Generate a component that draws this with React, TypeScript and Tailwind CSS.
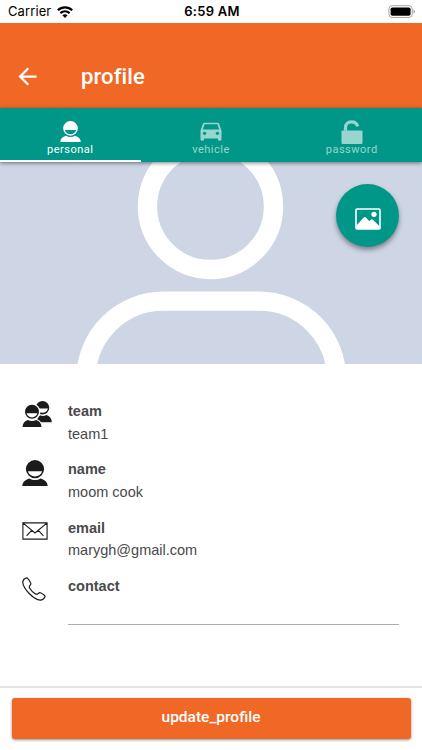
import type { ReactNode } from "react";
import { MdArrowBack, MdDirectionsCar } from "react-icons/md";

type Tab = {
  label: string;
  icon: ReactNode;
  active?: boolean;
};

type Field = {
  label: string;
  value?: string;
  icon: ReactNode;
};

function PersonIcon({ className }: { className?: string }) {
  return (
    <svg viewBox="0 0 26 26" className={className} fill="currentColor">
      <path
        fillRule="evenodd"
        d="M13 0a9.100 9.100 0 1 1 0 18.200A9.100 9.100 0 0 1 13 0ZM5.900 11.200c.9 3.200 3.600 5.200 7.100 5.200s6.200-2 7.100-5.200Z"
      />
      <path d="M.3 26c.2-4 2.700-6.300 7.200-7.600 3.400 2 7.600 2 11 0 4.500 1.300 7 3.600 7.200 7.600Z" />
    </svg>
  );
}

function TeamIcon() {
  return (
    <svg viewBox="0 0 30 26" className="h-[26px] w-[30px]" fill="currentColor">
      <path
        fillRule="evenodd"
        d="M20.500 0a6.800 6.800 0 1 1 0 13.600A6.800 6.800 0 0 1 20.500 0ZM15 7.400c.8 2.800 2.800 4.300 5.500 4.300s4.700-1.500 5.500-4.300Z"
      />
      <path d="M15 21.300c.1-3.500 1.200-6 3-7 2.100.9 4.300.9 6.400-.2 3.300 1 5.200 3.200 5.400 7.200Z" />
      <circle cx="10" cy="11" r="8.400" fill="white" />
      <path d="M-.7 27c.2-5 2.500-7.800 5.800-8.800h9.800c3.300 1 5.500 3.800 5.700 8.800Z" fill="white" />
      <path
        fillRule="evenodd"
        d="M10 3.800a7 7 0 1 1 0 14 7 7 0 0 1 0-14ZM4.600 12.300c.8 2.600 2.800 4.100 5.400 4.100s4.600-1.500 5.400-4.100Z"
      />
      <path d="M.5 26c.2-3.700 2-5.800 5.400-7 2.600 1.300 5.600 1.300 8.200 0 3.400 1.200 5.200 3.300 5.400 7Z" />
    </svg>
  );
}

function LockOpenIcon() {
  return (
    <svg viewBox="0 0 22 24" className="h-6 w-[22px]" fill="currentColor">
      <path
        d="M4.500 10.400V7.500C4.500 4.200 7 1.800 10.500 1.800c3.200 0 5.400 1.800 6.200 4.600"
        fill="none"
        stroke="currentColor"
        strokeWidth="3.200"
      />
      <rect x=".5" y="10.400" width="21" height="13.500" rx="1.200" />
    </svg>
  );
}

function MailIcon() {
  return (
    <svg
      viewBox="0 0 26 18"
      className="mt-1 h-[18px] w-[26px]"
      fill="none"
      stroke="currentColor"
      strokeWidth="1.100"
    >
      <path d="M.9.9h24.200v16.200H.9ZM.9.9 13 11 25.100.9M4.600 13.800l5-5.400M21.400 13.800l-5-5.400" />
    </svg>
  );
}

function PhoneIcon() {
  return (
    <svg
      viewBox="0 0 24 24"
      className="mt-px size-6"
      fill="none"
      stroke="currentColor"
      strokeWidth="1.200"
      strokeLinejoin="round"
    >
      <path d="M3.500 1.200C1.700 2 .7 3.700.8 5.500c.3 3.500 3 7.500 6.400 11 3.500 3.500 7.400 6.300 11 6.600 1.900.1 3.700-1 4.600-2.800.4-.8.2-1.500-.5-2.100-1.200-1-2.400-1.700-3.900-2.400-.8-.3-1.400-.1-2 .5-1.200 1.400-2.100 1.200-3.300.4-2-1.300-4-3.300-5.400-5.500-.8-1.300-.7-2 .6-3.200.6-.6.7-1.200.4-2C8 4.500 7.100 3 5.900 1.600c-.6-.8-1.500-.9-2.400-.4Z" />
    </svg>
  );
}

function ImageIcon() {
  return (
    <svg viewBox="0 0 26 22" className="h-[22px] w-[26px]" fill="currentColor">
      <rect
        x="1"
        y="1"
        width="24"
        height="20"
        rx="1"
        fill="none"
        stroke="currentColor"
        strokeWidth="1.600"
      />
      <circle cx="19" cy="6.300" r="2.600" />
      <path d="M1.500 17.500 8.700 9.600c.7-.8 1.500-.8 2.200 0l3.400 3.700 1.500-1.500c.7-.7 1.400-.7 2.100 0l6.600 6.400V21H1.500Z" />
    </svg>
  );
}

const tabs: Tab[] = [
  { label: "personal", icon: <PersonIcon className="mb-[2px] size-[21px]" />, active: true },
  { label: "vehicle", icon: <MdDirectionsCar className="h-[27px] w-[28px]" preserveAspectRatio="none" /> },
  { label: "password", icon: <LockOpenIcon /> },
];

const fields: Field[] = [
  { label: "team", value: "team1", icon: <TeamIcon /> },
  { label: "name", value: "moom cook", icon: <PersonIcon className="mt-px size-[26px]" /> },
  { label: "email", value: "marygh@gmail.com", icon: <MailIcon /> },
  { label: "contact", icon: <PhoneIcon /> },
];

function StatusBar() {
  return (
    <div className="grid h-[23px] grid-cols-3 items-center pr-[6px] pl-2 font-['Inter',sans-serif] text-black">
      <div className="flex items-center gap-[6px]">
        <span className="text-[13px] leading-none tracking-[0.1px]">Carrier</span>
        <svg viewBox="0 0 16 12" className="h-3 w-4" fill="none" stroke="currentColor">
          <path d="M.8 4.300c4.100-3.900 10.300-3.900 14.400 0" strokeWidth="2.200" />
          <path d="M3.400 7.100c2.700-2.400 6.500-2.400 9.200 0" strokeWidth="2.100" />
          <path d="M8 12 5.400 9.300c1.500-1.300 3.700-1.300 5.200 0Z" fill="currentColor" stroke="none" />
        </svg>
      </div>
      <span className="text-center text-[13px] leading-none font-semibold tracking-[0.25px]">
        6:59 AM
      </span>
      <svg viewBox="0 0 28 13" className="h-[13px] w-7 justify-self-end">
        <rect x=".9" y=".7" width="23.400" height="11.800" rx="3.400" fill="none" stroke="#a5a5a5" />
        <rect x="2.600" y="2.400" width="20" height="8.400" rx="1.800" fill="black" />
        <path d="M25.500 4.500c2 .8 2 3.400 0 4.200Z" fill="#a5a5a5" />
      </svg>
    </div>
  );
}

function TabBar() {
  return (
    <nav className="relative z-10 grid h-[54px] grid-cols-3 bg-[#009788] shadow-[0_1px_4px_rgba(0,0,0,0.5)]">
      {tabs.map((tab) => (
        <button
          key={tab.label}
          className={`flex flex-col items-center border-b-2 pt-3 ${
            tab.active ? "border-white text-white" : "border-transparent text-white/60"
          }`}
        >
          <span className="flex h-6 items-end">{tab.icon}</span>
          <span className="font-['Roboto',sans-serif] text-[11px] leading-3 tracking-[0.5px]">
            {tab.label}
          </span>
        </button>
      ))}
    </nav>
  );
}

function Cover() {
  return (
    <section className="relative h-[202px] overflow-hidden bg-[#ced5e5]">
      <svg
        viewBox="0 162 422 202"
        className="h-full w-full"
        fill="none"
        stroke="white"
        strokeWidth="19.300"
      >
        <circle cx="210.500" cy="206.500" r="63" />
        <path d="M86 378.500a77.300 77.300 0 0 1 77.300-77.300h95.900a77.300 77.300 0 0 1 77.300 77.300" />
      </svg>
      <button className="absolute top-[22px] right-[23px] flex size-[63px] items-center justify-center rounded-full bg-[#009788] pt-[7px] text-white shadow-[0_3px_5px_rgba(0,0,0,0.4)]">
        <ImageIcon />
      </button>
    </section>
  );
}

function FieldRow({ field }: { field: Field }) {
  return (
    <div className="flex h-[58.400px] pr-[23px] pl-[22px] font-['Liberation_Sans',Arial,sans-serif]">
      <span className="w-[46px] shrink-0 text-[#1b1b1d]">{field.icon}</span>
      <div className="flex-1 text-[14.500px] text-[#4a4a4a]">
        <div className="leading-5 font-bold">{field.label}</div>
        {field.value ? (
          <div className="mt-[2.700px] leading-5">{field.value}</div>
        ) : (
          <div className="h-[29px] border-b border-[#adadad]" />
        )}
      </div>
    </div>
  );
}

export default function App() {
  return (
    <div className="flex h-[750px] w-[422px] flex-col overflow-hidden bg-white">
      <StatusBar />
      <header className="flex h-[85px] items-center bg-[#f16725] pt-[23px] pl-[14px] font-['Roboto',sans-serif] text-white">
        <MdArrowBack className="-mt-px size-[27px]" />
        <h1 className="ml-10 text-[22px] leading-7 font-medium tracking-[0.1px]">profile</h1>
      </header>
      <TabBar />
      <Cover />
      <main className="flex-1 pt-[36.900px]">
        {fields.map((field) => (
          <FieldRow key={field.label} field={field} />
        ))}
      </main>
      <footer className="h-16 border-t-2 border-[#e4e4e4] px-[11.500px] pt-[10px]">
        <button className="h-[41px] w-full rounded-[3px] bg-[#f16725] pb-px font-['Roboto',sans-serif] text-[15.500px] font-medium text-white shadow-[0_1px_3px_rgba(0,0,0,0.45)]">
          update_profile
        </button>
      </footer>
    </div>
  );
}
